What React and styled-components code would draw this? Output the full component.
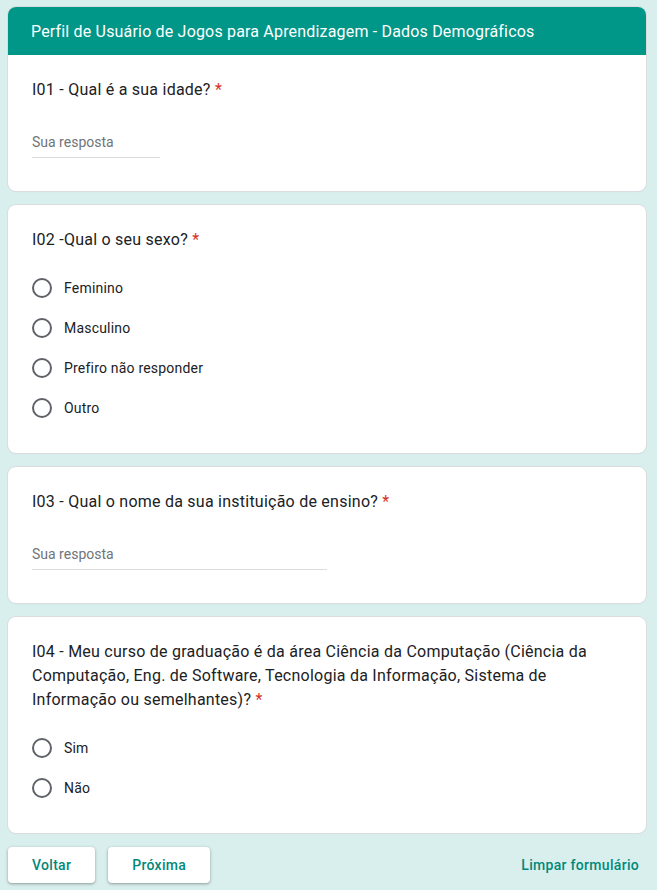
import React from 'react';
import styled, { createGlobalStyle } from 'styled-components';

const GlobalStyle = createGlobalStyle`
    html, body {
        margin: 0;
        padding: 0;
        background: #d9efed;
    }
    body {
        font-family: Roboto, "Noto Sans", Arial, sans-serif;
        color: #202124;
    }
`;

const questions = [
    { id: 'q1', title: 'I01 - Qual é a sua idade?', type: 'text', width: 128 },
    { id: 'q2', title: 'I02 -Qual o seu sexo?', type: 'radio', options: ['Feminino', 'Masculino', 'Prefiro não responder', 'Outro'] },
    { id: 'q3', title: 'I03 - Qual o nome da sua instituição de ensino?', type: 'text', width: 295 },
    {
        id: 'q4',
        title: 'I04 - Meu curso de graduação é da área Ciência da Computação (Ciência da Computação, Eng. de Software, Tecnologia da Informação, Sistema de Informação ou semelhantes)?',
        type: 'radio',
        options: ['Sim', 'Não'],
    },
];

const App = () => {
    return (
        <Page>
            <GlobalStyle />
            {questions.map((q, i) => (
                <Card key={q.id}>
                    {i === 0 && <Header>Perfil de Usuário de Jogos para Aprendizagem - Dados Demográficos</Header>}
                    <CardBody $text={q.type === 'text'}>
                        <Question>
                            {q.title}&nbsp;<Required>*</Required>
                        </Question>
                        {q.type === 'text' ? (
                            <Answer $width={q.width}>Sua resposta</Answer>
                        ) : (
                            <Options>
                                {q.options.map((opt) => (
                                    <Option key={opt}>
                                        <Radio />
                                        <span>{opt}</span>
                                    </Option>
                                ))}
                            </Options>
                        )}
                    </CardBody>
                </Card>
            ))}
            <Footer>
                <Buttons>
                    <Button>Voltar</Button>
                    <Button>Próxima</Button>
                </Buttons>
                <ClearLink>Limpar formulário</ClearLink>
            </Footer>
        </Page>
    );
};

const Page = styled.div`
    width: 638px;
    padding: 7px 0 8px 8px;
    display: flex;
    flex-direction: column;
    gap: 14px;
`;

const Card = styled.div`
    background: #ffffff;
    border-radius: 8px;
    box-shadow: 0 0 0 1px #dadce0, 0 1px 1px rgba(60, 64, 67, 0.08);
    overflow: hidden;
`;

const Header = styled.div`
    background: #009688;
    color: #ffffff;
    height: 48px;
    display: flex;
    align-items: center;
    padding: 0 23px;
    font-size: 16px;
    letter-spacing: 0.18px;
`;

const CardBody = styled.div`
    padding: ${(p) => (p.$text ? '23px 24px 33px' : '23px 24px 25px')};
`;

const Question = styled.div`
    font-size: 16px;
    line-height: 24px;
    color: #202124;
    letter-spacing: 0.24px;
`;

const Required = styled.span`
    color: #d93025;
`;

const Answer = styled.div`
    margin-top: 24px;
    width: ${(p) => p.$width}px;
    height: 31px;
    display: flex;
    align-items: center;
    font-size: 14px;
    color: #70757a;
    border-bottom: 1px solid #dadce0;
`;

const Options = styled.div`
    margin-top: 16px;
    display: flex;
    flex-direction: column;
`;

const Option = styled.div`
    height: 40px;
    display: flex;
    align-items: center;
    gap: 12px;
    font-size: 14px;
    color: #202124;
    letter-spacing: 0.2px;
`;

const Radio = styled.span`
    width: 16px;
    height: 16px;
    border: 2px solid #5f6368;
    border-radius: 50%;
`;

const Footer = styled.div`
    display: flex;
    align-items: center;
    justify-content: space-between;
    padding-right: 7px;
`;

const Buttons = styled.div`
    display: flex;
    gap: 13px;
`;

const Button = styled.button`
    height: 36px;
    padding: 0 24px;
    background: #ffffff;
    border: none;
    border-radius: 4px;
    box-shadow: 0 1px 2px rgba(60, 64, 67, 0.3), 0 1px 3px 1px rgba(60, 64, 67, 0.15);
    color: #00897b;
    font-family: Roboto, Arial, sans-serif;
    font-size: 14px;
    font-weight: 500;
    letter-spacing: 0.3px;
`;

const ClearLink = styled.span`
    color: #00897b;
    font-size: 14px;
    font-weight: 500;
    letter-spacing: 0.3px;
`;

export default App;
